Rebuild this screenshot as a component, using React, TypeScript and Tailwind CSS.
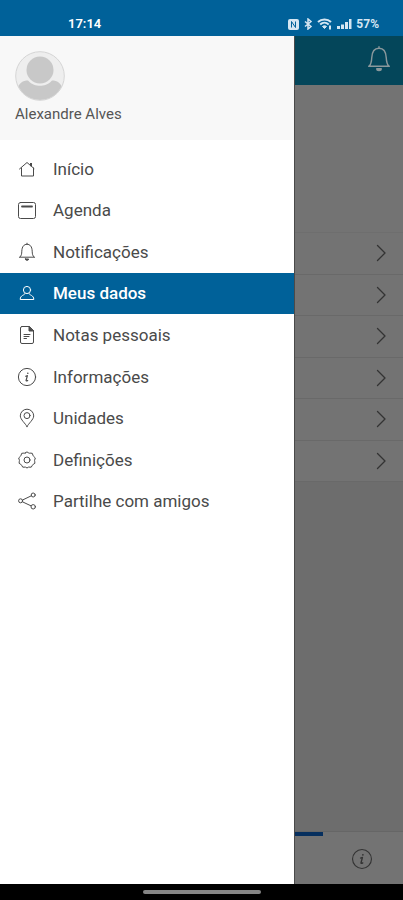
import type { ReactNode } from "react";

type IconProps = { className?: string; children: ReactNode };

function Icon({ className = "size-5", children }: IconProps) {
  return (
    <svg
      viewBox="0 0 20 20"
      className={className}
      fill="none"
      stroke="currentColor"
      strokeWidth="1"
      strokeLinecap="round"
      strokeLinejoin="round"
      aria-hidden="true"
    >
      {children}
    </svg>
  );
}

const INFO = (
  <>
    <circle cx="10" cy="10" r="8.6" />
    <circle cx="10.8" cy="6.2" r="0.8" fill="currentColor" stroke="none" />
    <path d="M8.7 9.2l1.7-.6-1.3 4.8c-.1.7.4.9 1.6.1" strokeWidth="1.2" />
  </>
);

const BELL = (
  <>
    <path d="M10 1.2v1M2.600 15.200h14.800M2.800 15.200c1.700-1.500 1.900-3.200 2-6C5 4.500 7 2.300 10 2.300s5 2.200 5.200 6.900c.1 2.800.3 4.500 2 6" />
    <path d="M8.400 17h3.200a1.600 1.300 0 0 1-3.200 0z" fill="currentColor" />
  </>
);

type Item = { label: string; icon: ReactNode; active?: boolean };

const MENU: Item[] = [
  {
    label: "Início",
    icon: (
      <>
        <path d="M2.500 10L10 3.500l7 6M4.500 9v8h12V9" />
        <path d="M14 4v3.200" strokeWidth="2" strokeLinecap="butt" />
      </>
    ),
  },
  {
    label: "Agenda",
    icon: (
      <>
        <rect x="1.500" y="2.500" width="17" height="16" rx="2" />
        <path d="M5 6.500h10" strokeWidth="1.800" />
      </>
    ),
  },
  { label: "Notificações", icon: BELL },
  {
    label: "Meus dados",
    active: true,
    icon: (
      <>
        <circle cx="10" cy="7" r="3.600" />
        <path d="M8 10.700c-.3 1.700-4.800 1.200-4.800 5.800h13.600c0-4.600-4.500-4.100-4.800-5.800" />
      </>
    ),
  },
  {
    label: "Notas pessoais",
    icon: (
      <>
        <path d="M5 1.500h7l4.500 4.500v11A1.500 1.500 0 0 1 15 18.500H5A1.500 1.500 0 0 1 3.500 17V3A1.500 1.500 0 0 1 5 1.500z" />
        <path d="M12 1.500v4.500h4.500z" fill="currentColor" />
        <path d="M7 9.500h6M7 11.500h5M7 13.500h2.500" />
      </>
    ),
  },
  { label: "Informações", icon: INFO },
  {
    label: "Unidades",
    icon: (
      <>
        <path d="M10 18.600C8.500 15.500 3.300 11.500 3.300 7.900a6.700 6.700 0 0 1 13.400 0c0 3.600-5.200 7.600-6.700 10.700z" />
        <circle cx="10" cy="7.600" r="3" />
      </>
    ),
  },
  {
    label: "Definições",
    icon: (
      <>
        <path d="M8.200 3Q10 .6 11.800 3q.6.400 1.300.1Q16 2.400 16 5.400q.1.600.7 1Q19.400 7.700 17.700 10q-.3.600 0 1.200 1.200 2.500-1.600 3.300-.6.200-.8.900-.5 2.700-3.300 1.700-.6-.1-1 .3-1 1.200-2 0-.4-.4-1-.3-2.800 1-3.300-1.700-.2-.7-.8-.9-2.800-.8-1.600-3.300.3-.600 0-1.200Q.6 7.700 3.300 6.400q.6-.4.7-1Q4 2.400 6.900 3.100q.7.300 1.300-.1z" />
        <circle cx="10" cy="10" r="3" />
      </>
    ),
  },
  {
    label: "Partilhe com amigos",
    icon: (
      <>
        <circle cx="3.600" cy="9.800" r="2" />
        <circle cx="16.200" cy="4" r="2" />
        <circle cx="16.200" cy="15.800" r="2.200" />
        <path d="M5.800 8.900l8.300-4M5.600 10.900l8.300 3.900" />
      </>
    ),
  },
];

const ROWS = ["1", "2", "3", "4", "5", "6"];

function StatusBar() {
  return (
    <div className="h-9 shrink-0 bg-[#006199] text-white flex items-end justify-between pl-[68px] pr-6 pb-1">
      <span className="text-[13px] leading-4 font-semibold">17:14</span>
      <div className="flex items-center gap-1 text-[#d5e6f2]">
        <svg viewBox="0 0 11 11" className="size-[11px]" aria-hidden="true">
          <rect width="11" height="11" rx="2" fill="currentColor" />
          <path d="M3.500 8.500v-6l4 6v-6" fill="none" stroke="#006199" strokeWidth="1" />
        </svg>
        <svg viewBox="0 0 10 12" className="w-[10px] h-3" fill="none" stroke="currentColor" strokeWidth="1.500" aria-hidden="true">
          <path d="M2 3.500l6 5-3 2.500V1l3 2.500-6 5" />
        </svg>
        <svg viewBox="0 0 16 12" className="w-4 h-3" fill="none" stroke="currentColor" strokeWidth="2" aria-hidden="true">
          <path d="M1 4c3.500-3.400 9.500-3.400 13 0M3.200 6.500c2.500-2.300 6-2.300 8.500 0" />
          <path d="M5.500 8.500c1.300-1 2.700-1 4 0l-2 2z" fill="currentColor" strokeWidth="1" />
          <path d="M13 7.500v4" />
        </svg>
        <svg viewBox="0 0 15 12" className="w-[15px] h-3" fill="currentColor" aria-hidden="true">
          <path d="M0 8h3v3H0zM4 6.500h3V11H4zM8 4h3v7H8zM12 1h2.500v10H12z" />
        </svg>
        <span className="text-xs leading-4 font-bold">57%</span>
      </div>
    </div>
  );
}

function Drawer() {
  return (
    <aside className="w-[73%] shrink-0 bg-white">
      <div className="bg-[#f8f8f8] h-[104px] px-[15px] pt-[15px]">
        <svg viewBox="0 0 50 50" className="size-[50px]" role="img" aria-label="Alexandre Alves">
          <defs>
            <clipPath id="avatar">
              <circle cx="25" cy="25" r="24" />
            </clipPath>
          </defs>
          <circle cx="25" cy="25" r="24" fill="#eeeeee" />
          <g clipPath="url(#avatar)" fill="#c8c8c8">
            <path d="M2 50V38c2-6 6-8.500 11-8.500 4 4.300 8 5.300 12 5.300s8-1 12-5.300c5 0 9 2.500 11 8.500v12z" />
            <circle cx="25" cy="19" r="13.500" />
          </g>
          <circle cx="25" cy="25" r="24.300" fill="none" stroke="#d4d4d4" />
        </svg>
        <p className="mt-[3px] text-[15px] leading-5 text-[#555]">Alexandre Alves</p>
      </div>

      <nav className="mt-2 grid auto-rows-fr min-h-[374px]">
        {MENU.map((item) => (
          <a
            key={item.label}
            href="#"
            aria-current={item.active ? "page" : undefined}
            className={
              item.active
                ? "flex items-center gap-4 px-[17px] bg-[#006199] text-white font-medium"
                : "flex items-center gap-4 px-[17px] text-[#4a4a4a]"
            }
          >
            <Icon>{item.icon}</Icon>
            <span className="text-[17px] leading-6">{item.label}</span>
          </a>
        ))}
      </nav>
    </aside>
  );
}

function Page() {
  return (
    <main className="flex-1 flex flex-col bg-[#6d6d6d] border-l border-[#4a4a4a]">
      <header className="h-[49px] shrink-0 bg-[#04465a] flex items-center justify-end pr-[10px] pb-1">
        <button type="button" aria-label="Notificações" className="text-[#8a989c]">
          <Icon className="size-7">{BELL}</Icon>
        </button>
      </header>

      <div className="h-[148px] bg-[#737373] border-b border-[#6e6e6e]" />

      <div className="grid auto-rows-fr min-h-[249px] bg-[#737373]">
        {ROWS.map((row) => (
          <button
            key={row}
            type="button"
            aria-label={"Opção " + row}
            className="flex items-center justify-end pr-3 border-b border-[#696969] text-[#333]"
          >
            <Icon>
              <path d="M6.500 2.500L14 10l-7.500 7.500" strokeWidth="1.300" />
            </Icon>
          </button>
        ))}
      </div>

      <footer className="mt-auto h-[53px] bg-[#737373] border-t border-[#666]">
        <div className="h-1 w-7 bg-[#062f5e]" />
        <div className="flex justify-end pr-[30px] pt-3">
          <button type="button" aria-label="Informações" className="text-[#333]">
            <Icon className="size-[22px]">{INFO}</Icon>
          </button>
        </div>
      </footer>
    </main>
  );
}

export default function App() {
  return (
    <div className="min-h-screen flex flex-col bg-white font-[Roboto,sans-serif]">
      <StatusBar />
      <div className="flex-1 flex">
        <Drawer />
        <Page />
      </div>
      <div className="h-4 shrink-0 bg-black flex justify-center pt-[6px]">
        <div className="h-1 w-[118px] rounded-full bg-[#858585]" />
      </div>
    </div>
  );
}
